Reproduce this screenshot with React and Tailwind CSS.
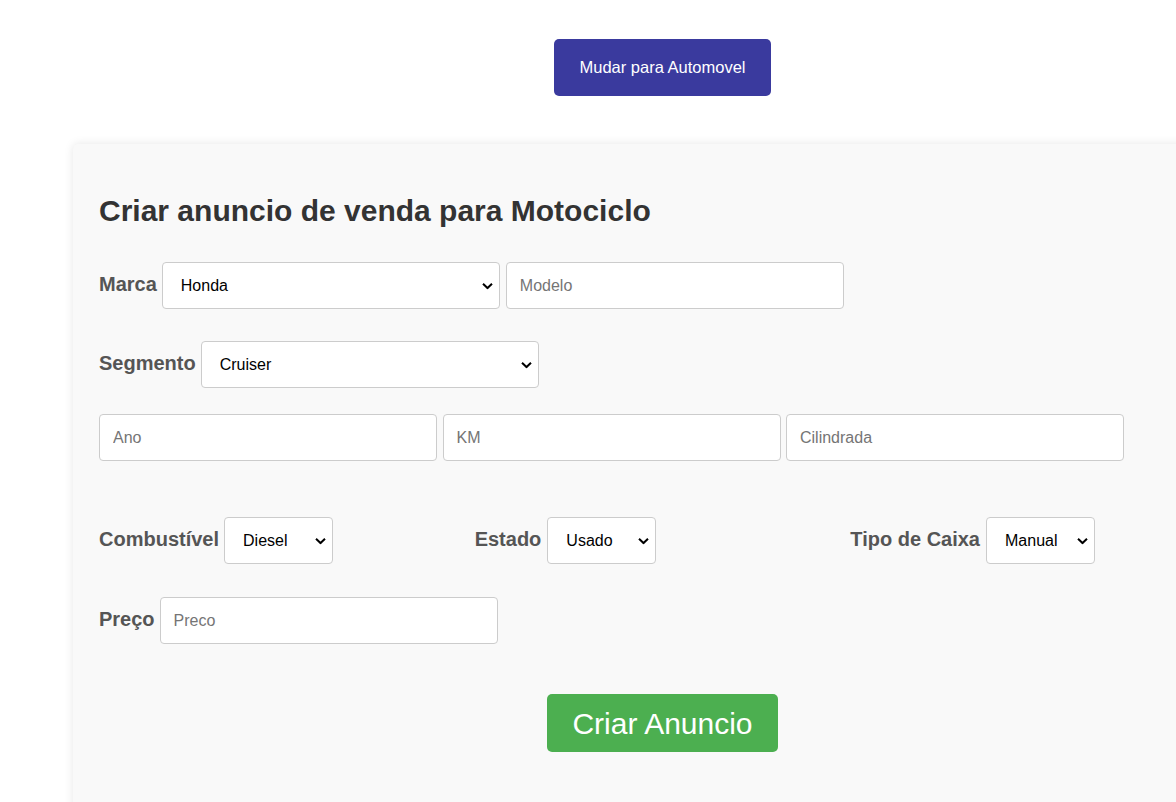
import React from "react";

const font = { fontFamily: '"Liberation Sans", Arial, sans-serif' };

function Select({ value, options, w, h = "h-[46px]" }) {
  return (
    <div className={`relative ${w} ${h}`}>
      <select
        defaultValue={value}
        className={`appearance-none w-full h-full bg-white border border-[#cccccc] rounded-[4px] pl-[18px] pr-[24px] text-[16px] text-black outline-none`}
        style={font}
      >
        {options.map((o) => (
          <option key={o}>{o}</option>
        ))}
      </select>
      <svg
        className="absolute right-[7px] top-1/2 -translate-y-1/2 pointer-events-none"
        width="11"
        height="7"
        viewBox="0 0 11 7"
      >
        <path d="M1 1.2 L5.5 5.5 L10 1.2" fill="none" stroke="#000" strokeWidth="2" />
      </svg>
    </div>
  );
}

function Input({ placeholder }) {
  return (
    <input
      placeholder={placeholder}
      className="w-[338px] h-[47px] bg-white border border-[#cccccc] rounded-[4px] px-[13px] text-[16px] text-black placeholder:text-[#757575] outline-none"
      style={font}
    />
  );
}

function Label({ children }) {
  return <label className="text-[20px] font-bold text-[#555555] leading-[23px]">{children}</label>;
}

export default function App() {
  return (
    <div className="w-full min-h-[802px] bg-white overflow-hidden" style={font}>
      <div className="w-[1325px] flex flex-col items-center">
        <button className="mt-[39px] w-[217px] h-[57px] bg-[#3a3a9e] text-white text-[16.5px] rounded-[5px]">
          Mudar para Automovel
        </button>
        <div className="mt-[48px] ml-[73px] mr-[73px] self-stretch bg-[#f9f9f9] shadow-[0_0_10px_rgba(0,0,0,0.1)] rounded-[5px] pl-[26px] pr-[26px] pt-[50px] pb-[80px] flex flex-col">
          <h2 className="text-[30px] font-bold text-[#333333] leading-[34px]">
            Criar anuncio de venda para Motociclo
          </h2>
          <div className="mt-[34px] flex items-baseline">
            <Label>Marca</Label>
            <div className="ml-[5px]">
              <Select value="Honda" options={["Honda", "Yamaha", "Suzuki", "Kawasaki"]} w="w-[338px]" h="h-[47px]" />
            </div>
            <div className="ml-[6px]">
              <Input placeholder="Modelo" />
            </div>
          </div>
          <div className="mt-[32px] flex items-baseline">
            <Label>Segmento</Label>
            <div className="ml-[5px]">
              <Select value="Cruiser" options={["Cruiser", "Sport", "Touring", "Naked"]} w="w-[338px]" h="h-[47px]" />
            </div>
          </div>
          <div className="mt-[26px] flex gap-[5.5px]">
            <Input placeholder="Ano" />
            <Input placeholder="KM" />
            <Input placeholder="Cilindrada" />
          </div>
          <div className="mt-[56px] grid grid-cols-3">
            <div className="flex items-baseline">
              <Label>Combustível</Label>
              <div className="ml-[5px]">
                <Select value="Diesel" options={["Diesel", "Gasolina", "Eletrico"]} w="w-[109px]" h="h-[47px]" />
              </div>
            </div>
            <div className="flex items-baseline">
              <Label>Estado</Label>
              <div className="ml-[6px]">
                <Select value="Usado" options={["Usado", "Novo"]} w="w-[109px]" h="h-[47px]" />
              </div>
            </div>
            <div className="flex items-baseline">
              <Label>Tipo de Caixa</Label>
              <div className="ml-[6px]">
                <Select value="Manual" options={["Manual", "Automatica"]} w="w-[109px]" h="h-[47px]" />
              </div>
            </div>
          </div>
          <div className="mt-[33px] flex items-baseline">
            <Label>Preço</Label>
            <div className="ml-[5px]">
              <Input placeholder="Preco" />
            </div>
          </div>
          <div className="mt-[50px] flex justify-center">
            <button className="w-[231px] h-[58px] bg-[#4caf50] text-white text-[30px] rounded-[5px]">
              Criar Anuncio
            </button>
          </div>
        </div>
      </div>
    </div>
  );
}
